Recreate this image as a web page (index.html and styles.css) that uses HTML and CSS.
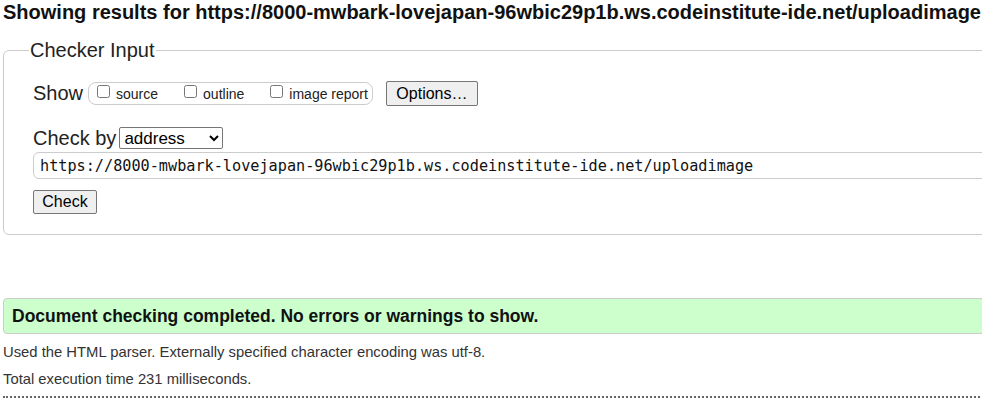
FILE: index.html
```html
<!DOCTYPE html>
<html>
<head>
<meta charset="utf-8">
<title>Showing results for https://8000-mwbark-lovejapan-96wbic29p1b.ws.codeinstitute-ide.net/uploadimage - Nu Html Checker</title>
<link rel="stylesheet" href="styles.css">
</head>
<body>
<h2 class="title">Showing results for https://8000-mwbark-lovejapan-96wbic29p1b.ws.codeinstitute-ide.net/uploadimage</h2>
<form class="checker">
  <fieldset class="fs">
    <legend class="legend">Checker Input</legend>
    <div class="row show-row">
      <span class="row-label">Show</span>
      <span class="opts">
        <label class="opt"><input type="checkbox" class="cb"><span>source</span></label>
        <label class="opt"><input type="checkbox" class="cb"><span>outline</span></label>
        <label class="opt"><input type="checkbox" class="cb"><span>image report</span></label>
      </span>
      <button type="button" class="btn options">Options…</button>
    </div>
    <div class="row by-row">
      <span class="row-label">Check by</span>
      <select class="sel"><option>address</option></select>
    </div>
    <input class="url" type="text" value="https://8000-mwbark-lovejapan-96wbic29p1b.ws.codeinstitute-ide.net/uploadimage">
    <div class="submit-row"><button type="button" class="btn check">Check</button></div>
  </fieldset>
</form>
<div class="success"><p class="success-text">Document checking completed. No errors or warnings to show.</p></div>
<p class="details first">Used the HTML parser. Externally specified character encoding was utf-8.</p>
<p class="details">Total execution time 231 milliseconds.</p>
<hr class="rule">
</body>
</html>
```
FILE: styles.css
```css
html, body {
  margin: 0;
  padding: 0;
  overflow: hidden;
  background: #fff;
}
body {
  padding: 0 3px;
  font-family: "Liberation Sans", Arial, sans-serif;
  color: #000;
  width: 1100px;
}
.title {
  margin: 0;
  padding-top: 1px;
  font-size: 20px;
  font-weight: bold;
  line-height: 22px;
  white-space: nowrap;
  color: #111;
}
.checker {
  margin: 16px 0 0 0;
}
.fs {
  margin: 0;
  border: 1px solid #ccc;
  border-radius: 6px;
  padding: 0 29px 20px 29px;
  min-width: 0;
  width: 1040px;
}
.legend {
  font-size: 20px;
  padding: 0 1px;
  margin-left: -4px;
  line-height: 22px;
  color: #222;
}
.row {
  display: flex;
  align-items: center;
}
.row-label {
  font-size: 20px;
  color: #222;
}
.show-row {
  margin-top: 20px;
  height: 25px;
}
.opts {
  display: inline-flex;
  align-items: center;
  margin-left: 5px;
  height: 21px;
  border: 1px solid #ccc;
  border-radius: 8px;
  padding: 0 4px 0 3px;
}
.opt {
  display: inline-flex;
  align-items: center;
  font-size: 14px;
  color: #222;
  margin-right: 21px;
}
.opt:last-child {
  margin-right: 0;
}
.cb {
  margin: 0 6px 0 5px;
  width: 13px;
  height: 13px;
  position: relative;
  top: -2px;
}
.btn {
  font-family: "Liberation Sans", Arial, sans-serif;
  font-size: 16px;
  color: #000;
  background: #efefef;
  border: 1px solid #767676;
  border-radius: 2px;
  padding: 0 9px;
}
.options {
  margin-left: 13px;
  height: 25px;
  width: 92px;
}
.by-row {
  margin-top: 21px;
  height: 22px;
}
.sel {
  margin-left: 3px;
  width: 104px;
  height: 22px;
  font-family: "Liberation Sans", Arial, sans-serif;
  font-size: 17px;
  border: 1px solid #767676;
  border-radius: 2px;
  background: #fff;
  color: #000;
}
.url {
  display: block;
  box-sizing: border-box;
  margin-top: 3px;
  width: 1100px;
  height: 27px;
  border: 1px solid #ccc;
  border-radius: 6px;
  padding: 0 6px;
  font-family: "DejaVu Sans Mono", "Liberation Mono", monospace;
  font-size: 15.2px;
  color: #111;
}
.submit-row {
  margin-top: 11px;
}
.check {
  width: 64px;
  height: 24px;
  padding: 0;
}
.success {
  margin-top: 63px;
  background: #ccffcc;
  border: 1px solid #ccc;
  border-radius: 4px;
  width: 1100px;
  height: 34px;
  display: flex;
  align-items: center;
}
.success-text {
  margin: 0 0 0 8px;
  font-size: 17.5px;
  font-weight: bold;
  color: #111;
}
.details {
  margin: 0;
  font-size: 14.8px;
  line-height: 27px;
  color: #333;
}
.first {
  margin-top: 5px;
}
.rule {
  margin: 3px 0 0 0;
  border: 0;
  border-top: 2px dotted #666;
  width: 1100px;
}
```
